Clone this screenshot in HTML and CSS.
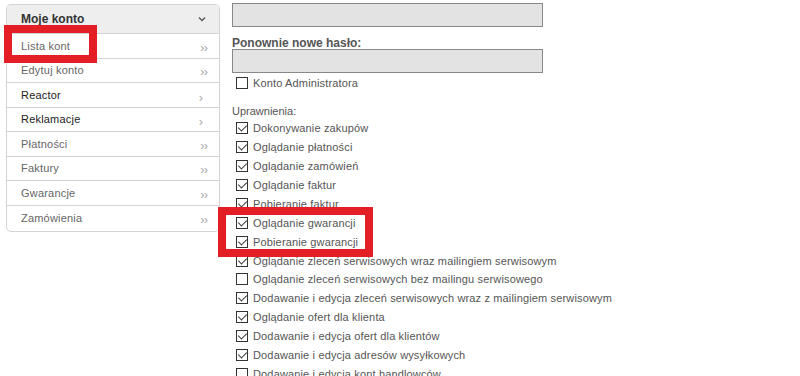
FILE: index.html
```html
<!DOCTYPE html>
<html lang="pl">
<head>
  <meta charset="UTF-8" />
  <title>Moje konto</title>
  <link rel="stylesheet" href="styles.css">
</head>
<body>
  <div class="page">
    <nav class="menu">
      <div class="menu-head">
        <span>Moje konto</span>
        <svg class="caret" width="8" height="6" viewBox="0 0 8 6"><path d="M1 1.5 L4 4.5 L7 1.5" fill="none" stroke="#555" stroke-width="1.3"/></svg>
      </div>
      <ul>
        <li class="sub">Lista kont <span class="arr">&rsaquo;&rsaquo;</span></li>
        <li class="sub">Edytuj konto <span class="arr">&rsaquo;&rsaquo;</span></li>
        <li class="group">Reactor <span class="arr">&rsaquo;</span></li>
        <li class="group">Reklamacje <span class="arr">&rsaquo;</span></li>
        <li class="sub">Płatności <span class="arr">&rsaquo;&rsaquo;</span></li>
        <li class="sub">Faktury <span class="arr">&rsaquo;&rsaquo;</span></li>
        <li class="sub">Gwarancje <span class="arr">&rsaquo;&rsaquo;</span></li>
        <li class="sub">Zamówienia <span class="arr">&rsaquo;&rsaquo;</span></li>
      </ul>
    </nav>

    <div class="form">
      <div class="field"></div>
      <label class="lbl">Ponownie nowe hasło:</label>
      <div class="field"></div>
      <div class="check admin"><span class="box"></span>Konto Administratora</div>

      <div class="perm-title">Uprawnienia:</div>
      <div class="perms">
        <div class="check"><span class="box on"></span>Dokonywanie zakupów</div>
        <div class="check"><span class="box on"></span>Oglądanie płatności</div>
        <div class="check"><span class="box on"></span>Oglądanie zamówień</div>
        <div class="check"><span class="box on"></span>Oglądanie faktur</div>
        <div class="check"><span class="box on"></span>Pobieranie faktur</div>
        <div class="check"><span class="box on"></span>Oglądanie gwarancji</div>
        <div class="check"><span class="box on"></span>Pobieranie gwarancji</div>
        <div class="check"><span class="box on"></span>Oglądanie zleceń serwisowych wraz mailingiem serwisowym</div>
        <div class="check"><span class="box"></span>Oglądanie zleceń serwisowych bez mailingu serwisowego</div>
        <div class="check"><span class="box on"></span>Dodawanie i edycja zleceń serwisowych wraz z mailingiem serwisowym</div>
        <div class="check"><span class="box on"></span>Oglądanie ofert dla klienta</div>
        <div class="check"><span class="box on"></span>Dodawanie i edycja ofert dla klientów</div>
        <div class="check"><span class="box on"></span>Dodawanie i edycja adresów wysyłkowych</div>
        <div class="check"><span class="box"></span>Dodawanie i edycja kont handlowców</div>
      </div>
    </div>

    <div class="mark mark-menu"></div>
    <div class="mark mark-perms"></div>
  </div>
</body>
</html>
```

FILE: styles.css
```css
* {
  box-sizing: border-box;
}
body {
  margin: 0;
  background: #fff;
  font-family: "Liberation Sans", Arial, sans-serif;
  font-size: 11px;
  color: #555;
  overflow: hidden;
}
.page {
  position: relative;
  display: flex;
  align-items: flex-start;
  gap: 12px;
  padding: 3px 0 0 6px;
  height: 376px;
}
.menu {
  width: 214px;
  margin-top: 1px;
  border: 1px solid #d4d4d4;
  border-radius: 5px;
  background: #fff;
}
.menu-head {
  display: flex;
  justify-content: space-between;
  align-items: center;
  height: 29px;
  padding: 0 13px 0 14px;
  background: #eeeeee;
  border-bottom: 1px solid #d4d4d4;
  border-radius: 5px 5px 0 0;
  font-weight: bold;
  font-size: 12px;
  color: #333;
}
.menu ul {
  list-style: none;
  margin: 0;
  padding: 0;
}
.menu li {
  display: flex;
  justify-content: space-between;
  align-items: center;
  height: 24.5px;
  padding: 0 12px 0 14px;
  border-bottom: 1px solid #d4d4d4;
  letter-spacing: 0.2px;
}
.menu li:last-child {
  border-bottom: none;
  height: 25px;
}
.menu li.sub {
  color: #666;
}
.menu li.group {
  color: #222;
}
.arr {
  color: #aaa;
  font-size: 13px;
  letter-spacing: -1px;
  padding-top: 3px;
}
.group .arr {
  padding-right: 5px;
  padding-top: 5px;
}
.form {
  width: 311px;
}
.field {
  height: 24px;
  border: 1px solid #888;
  background: #e3e3e3;
}
.lbl {
  display: block;
  margin: 11px 0 1px;
  font-weight: bold;
  font-size: 12px;
  line-height: 10px;
}
.check {
  display: flex;
  align-items: center;
  height: 18.9px;
  padding-left: 4px;
  white-space: nowrap;
  letter-spacing: 0.15px;
}
.admin {
  margin-top: 1px;
}
.box {
  width: 12px;
  height: 12px;
  border: 1px solid #333;
  background: #fff;
  margin-right: 5px;
  flex: none;
  position: relative;
}
.box.on::after {
  content: "";
  position: absolute;
  left: 3px;
  top: 0px;
  width: 4px;
  height: 7px;
  border: solid #333;
  border-width: 0 1.3px 1.3px 0;
  transform: rotate(45deg);
}
.perm-title {
  margin-top: 11px;
  height: 15px;
  line-height: 15px;
}
.mark {
  position: absolute;
  border: 8px solid #e31e24;
}
.mark-menu {
  left: 4px;
  top: 25px;
  width: 93px;
  height: 38px;
}
.mark-perms {
  left: 218px;
  top: 207px;
  width: 155px;
  height: 50px;
}
```
